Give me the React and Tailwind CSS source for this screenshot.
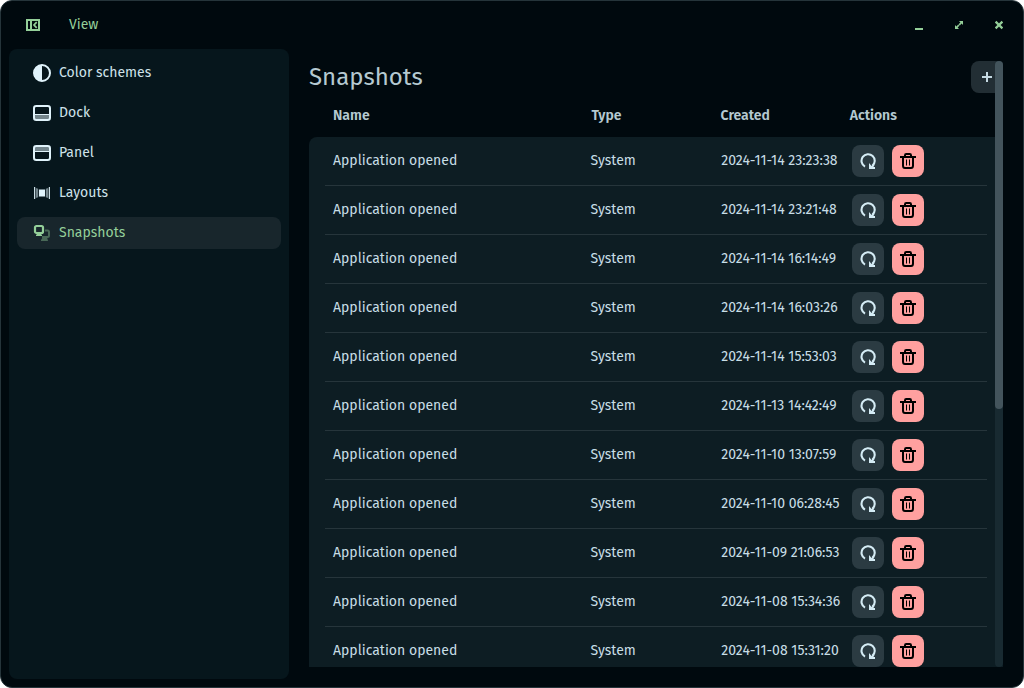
import React from 'react';

const snapshots = [
  '2024-11-14 23:23:38',
  '2024-11-14 23:21:48',
  '2024-11-14 16:14:49',
  '2024-11-14 16:03:26',
  '2024-11-14 15:53:03',
  '2024-11-13 14:42:49',
  '2024-11-10 13:07:59',
  '2024-11-10 06:28:45',
  '2024-11-09 21:06:53',
  '2024-11-08 15:34:36',
  '2024-11-08 15:31:20',
];

function SidebarIcon() {
  return (
    <svg width="16" height="16" viewBox="0 0 16 16" fill="none" stroke="currentColor">
      <path d="M1 2h14v12H1zM3 4v8h2V4zM7 4v8h6V4z" fill="currentColor" fillRule="evenodd" stroke="none" />
      <path d="M11.7 5.2 9 8l2.7 2.8" strokeWidth="1.7" />
    </svg>
  );
}

function ContrastIcon() {
  return (
    <svg width="18" height="18" viewBox="0 0 18 18">
      <circle cx="9" cy="9" r="8" fill="none" stroke="currentColor" strokeWidth="2" />
      <path d="M9 1a8 8 0 0 0 0 16z" fill="currentColor" />
    </svg>
  );
}

function DockIcon() {
  return (
    <svg width="18" height="18" viewBox="0 0 18 18">
      <path d="M2 11h14v4H2z" fill="currentColor" opacity=".5" />
      <rect x="1" y="2" width="16" height="14" rx="2.3" fill="none" stroke="currentColor" strokeWidth="2" />
      <path d="M2 10.5h14" stroke="currentColor" strokeWidth="1" />
    </svg>
  );
}

function PanelIcon() {
  return (
    <svg width="18" height="18" viewBox="0 0 18 18">
      <path d="M2 3h14v4H2z" fill="currentColor" opacity=".5" />
      <rect x="1" y="2" width="16" height="14" rx="2.3" fill="none" stroke="currentColor" strokeWidth="2" />
      <path d="M2 7.5h14" stroke="currentColor" strokeWidth="1" />
    </svg>
  );
}

function LayoutsIcon() {
  return (
    <svg width="18" height="18" viewBox="0 0 18 18" fill="currentColor">
      <path d="M6 5.5h6v7H6z" />
      <path d="M1 3h1.2v12H1zM15.8 3H17v12h-1.2z" opacity=".9" />
      <path d="M2.8 4l2.4.7v8.6l-2.4.7zM15.2 4l-2.4.7v8.6l2.4.7z" opacity=".5" />
    </svg>
  );
}

function SnapshotsIcon() {
  return (
    <svg width="18" height="18" viewBox="0 0 18 18">
      <g opacity=".4">
        <path d="M12 6.5h2.5A1.5 1.5 0 0 1 16 8v3.5a1.5 1.5 0 0 1-1.5 1.5H9" fill="none" stroke="currentColor" strokeWidth="2" />
        <path d="M10 13h4l1 4H8v-1z" fill="currentColor" />
      </g>
      <rect x="2" y="2" width="8" height="7" rx="1.5" fill="none" stroke="currentColor" strokeWidth="2.2" />
      <path d="M4 9.5h4v1h1V12H3v-1.5h1z" fill="currentColor" />
    </svg>
  );
}

function RestoreIcon() {
  return (
    <svg width="16" height="16" viewBox="0 0 16 16">
      <path d="M5 13.6A6.6 6.6 0 1 1 12.3 12.9" fill="none" stroke="currentColor" strokeWidth="2.1" />
      <path d="M9 10v6h6v-2h-1.8l1.3-1.4-1.2-1.2-1.7 1.5z" fill="currentColor" />
    </svg>
  );
}

function TrashIcon() {
  return (
    <svg width="16" height="16" viewBox="0 0 16 16" fill="none" stroke="currentColor">
      <path d="M0 4h16" strokeWidth="2" />
      <path d="M5 3.5V2.2Q5 1 6.2 1h3.6Q11 1 11 2.2v1.3" strokeWidth="2" />
      <path d="M3 4v8.5Q3 15 5 15h6q2 0 2-2.5V4" strokeWidth="2" />
      <path d="M6.5 6.5v6M9.5 6.5v6" strokeWidth="1" />
    </svg>
  );
}

const navItems = [
  { label: 'Color schemes', Icon: ContrastIcon },
  { label: 'Dock', Icon: DockIcon },
  { label: 'Panel', Icon: PanelIcon },
  { label: 'Layouts', Icon: LayoutsIcon },
  { label: 'Snapshots', Icon: SnapshotsIcon, active: true },
];

function TitleBar() {
  return (
    <header className="flex h-12 shrink-0 items-center pl-6 text-[#94cf99]">
      <SidebarIcon />
      <span className="ml-7 text-sm">View</span>
      <div className="ml-auto flex items-center gap-6 pr-4">
        <svg width="16" height="16" viewBox="0 0 16 16">
          <path d="M4 11h8v2H4z" fill="currentColor" />
        </svg>
        <svg width="16" height="16" viewBox="0 0 16 16">
          <path d="M8 4h4v4l-1.4-1.4L8.8 8.4 7.6 7.2l1.8-1.8zM4 8l1.4 1.4 1.8-1.8 1.2 1.2-1.8 1.8L8 12H4z" fill="currentColor" />
        </svg>
        <svg width="16" height="16" viewBox="0 0 16 16">
          <path d="m4.6 4.6 6.8 6.8M11.4 4.6l-6.8 6.8" stroke="currentColor" strokeWidth="2.2" />
        </svg>
      </div>
    </header>
  );
}

function Sidebar() {
  return (
    <nav className="flex w-[280px] shrink-0 flex-col gap-2 rounded-lg bg-[#06161c] px-2 py-2">
      {navItems.map(({ label, Icon, active }) => (
        <div
          key={label}
          className={`flex h-8 items-center gap-2 rounded-lg pl-4 text-sm ${active ? 'bg-[#18262c] text-[#94cf99]' : 'text-[#e0f3fb]'}`}
        >
          <Icon />
          <span className={active ? '' : 'text-[#cfe2ea]'}>{label}</span>
        </div>
      ))}
    </nav>
  );
}

function SnapshotRow({ created }) {
  return (
    <div className="flex h-[49px] shrink-0 items-center border-b border-[#26353b] pl-2 text-sm text-[#c8dee6]">
      <span className="w-[257.5px]">Application opened</span>
      <span className="w-[130.8px]">System</span>
      <span className="w-[130.7px] whitespace-nowrap">{created}</span>
      <div className="flex shrink-0 gap-2 text-[#d5ecf5]">
        <button className="flex size-8 items-center justify-center rounded-lg bg-[#2b3b42]">
          <RestoreIcon />
        </button>
        <button className="flex size-8 items-center justify-center rounded-lg bg-[#ffa09f] text-black">
          <TrashIcon />
        </button>
      </div>
    </div>
  );
}

export default function App() {
  return (
    <div className="h-[688px] w-[1024px] bg-white font-['Fira_Sans','Noto_Sans',sans-serif]">
      <div className="flex h-full flex-col overflow-hidden rounded-xl border border-[#25343a] bg-[#00090e]">
        <TitleBar />
        <div className="flex min-h-0 grow pb-2 pl-2">
          <Sidebar />
          <main className="relative mb-3 ml-5 mt-3 flex w-[694px] flex-col overflow-hidden">
            <div className="flex h-8 shrink-0 items-center justify-between">
              <h1 className="text-2xl leading-8 text-[#b5c9d1]">Snapshots</h1>
              <button className="flex size-8 items-center justify-center rounded-lg bg-[#222e34] text-[#c5d9e2]">
                <svg width="16" height="16" viewBox="0 0 16 16">
                  <path d="M3 7h4V3h2v4h4v2H9v4H7V9H3z" fill="currentColor" />
                </svg>
              </button>
            </div>
            <div className="flex h-11 shrink-0 items-center pl-6 pt-0.5 text-sm font-semibold text-[#b5c9d1]">
              <span className="w-[258.4px]">Name</span>
              <span className="w-[129.2px]">Type</span>
              <span className="w-[129.2px]">Created</span>
              <span>Actions</span>
            </div>
            <div className="flex shrink-0 flex-col rounded-t-lg bg-[#0d1d23] px-4">
              {snapshots.map((created) => (
                <SnapshotRow key={created} created={created} />
              ))}
            </div>
            <div className="absolute inset-y-0 right-0 w-2 rounded bg-[#182a31]">
              <div className="h-[348px] rounded bg-[#43545c]" />
            </div>
          </main>
        </div>
      </div>
    </div>
  );
}
